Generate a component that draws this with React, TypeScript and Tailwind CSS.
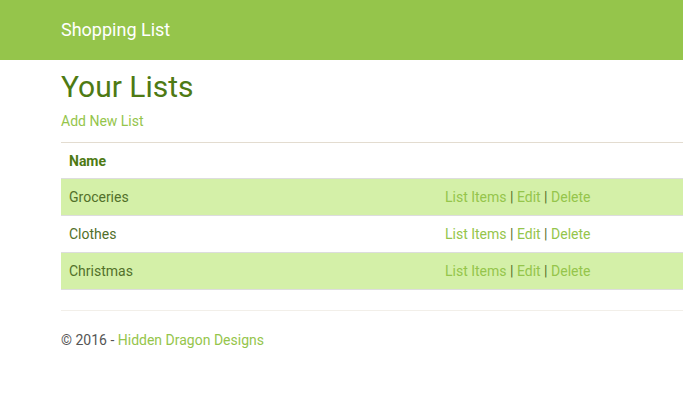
import React from "react"

/* ---------------- DATA ---------------- */

const LISTS = ["Groceries", "Clothes", "Christmas"]

/* ---------------- PAGE ---------------- */

export default function App() {
  return (
    <div
      className="min-h-[405px] w-[683px] overflow-hidden bg-white text-[14px] leading-[20px] text-[#555]"
      style={{ fontFamily: "Roboto, 'Liberation Sans', sans-serif" }}
    >
      {/* NAVBAR */}
      <div className="h-[60px] bg-[#95c54b] flex items-center">
        <div className="pl-[61px] text-[18px] text-white">Shopping List</div>
      </div>

      {/* BODY */}
      <div className="pl-[61px] w-[780px]">
        <h2 className="mt-[10px] text-[30px] leading-[33px] text-[#4e7a14]">
          Your Lists
        </h2>
        <p className="mt-[8px]">
          <a className="text-[#95c54b]">Add New List</a>
        </p>

        <table className="mt-[11px] w-full border-collapse">
          <thead>
            <tr className="border-t border-[#e3dcd0]">
              <th className="text-left font-bold text-[#4e7a14] px-2 pt-2 pb-[7px] border-b border-[#ddd]">
                Name
              </th>
              <th className="border-b border-[#ddd] w-[343px]" />
            </tr>
          </thead>
          <tbody>
            {LISTS.map((name, i) => (
              <tr
                key={name}
                className={`border-b border-[#ddd] ${
                  i % 2 === 0 ? "bg-[#d4f0a8]" : "bg-white"
                }`}
              >
                <td className="px-2 py-2 text-[#52702a]">{name}</td>
                <td className="px-2 py-2 text-[#52702a]">
                  <a className="text-[#95c54b]">List Items</a> |{" "}
                  <a className="text-[#95c54b]">Edit</a> |{" "}
                  <a className="text-[#95c54b]">Delete</a>
                </td>
              </tr>
            ))}
          </tbody>
        </table>

        <hr className="mt-[20px] border-t border-[#f2efe9]" />

        <footer className="mt-[19px]">
          <p>
            © 2016 - <a className="text-[#95c54b]">Hidden Dragon Designs</a>
          </p>
        </footer>
      </div>
    </div>
  )
}
